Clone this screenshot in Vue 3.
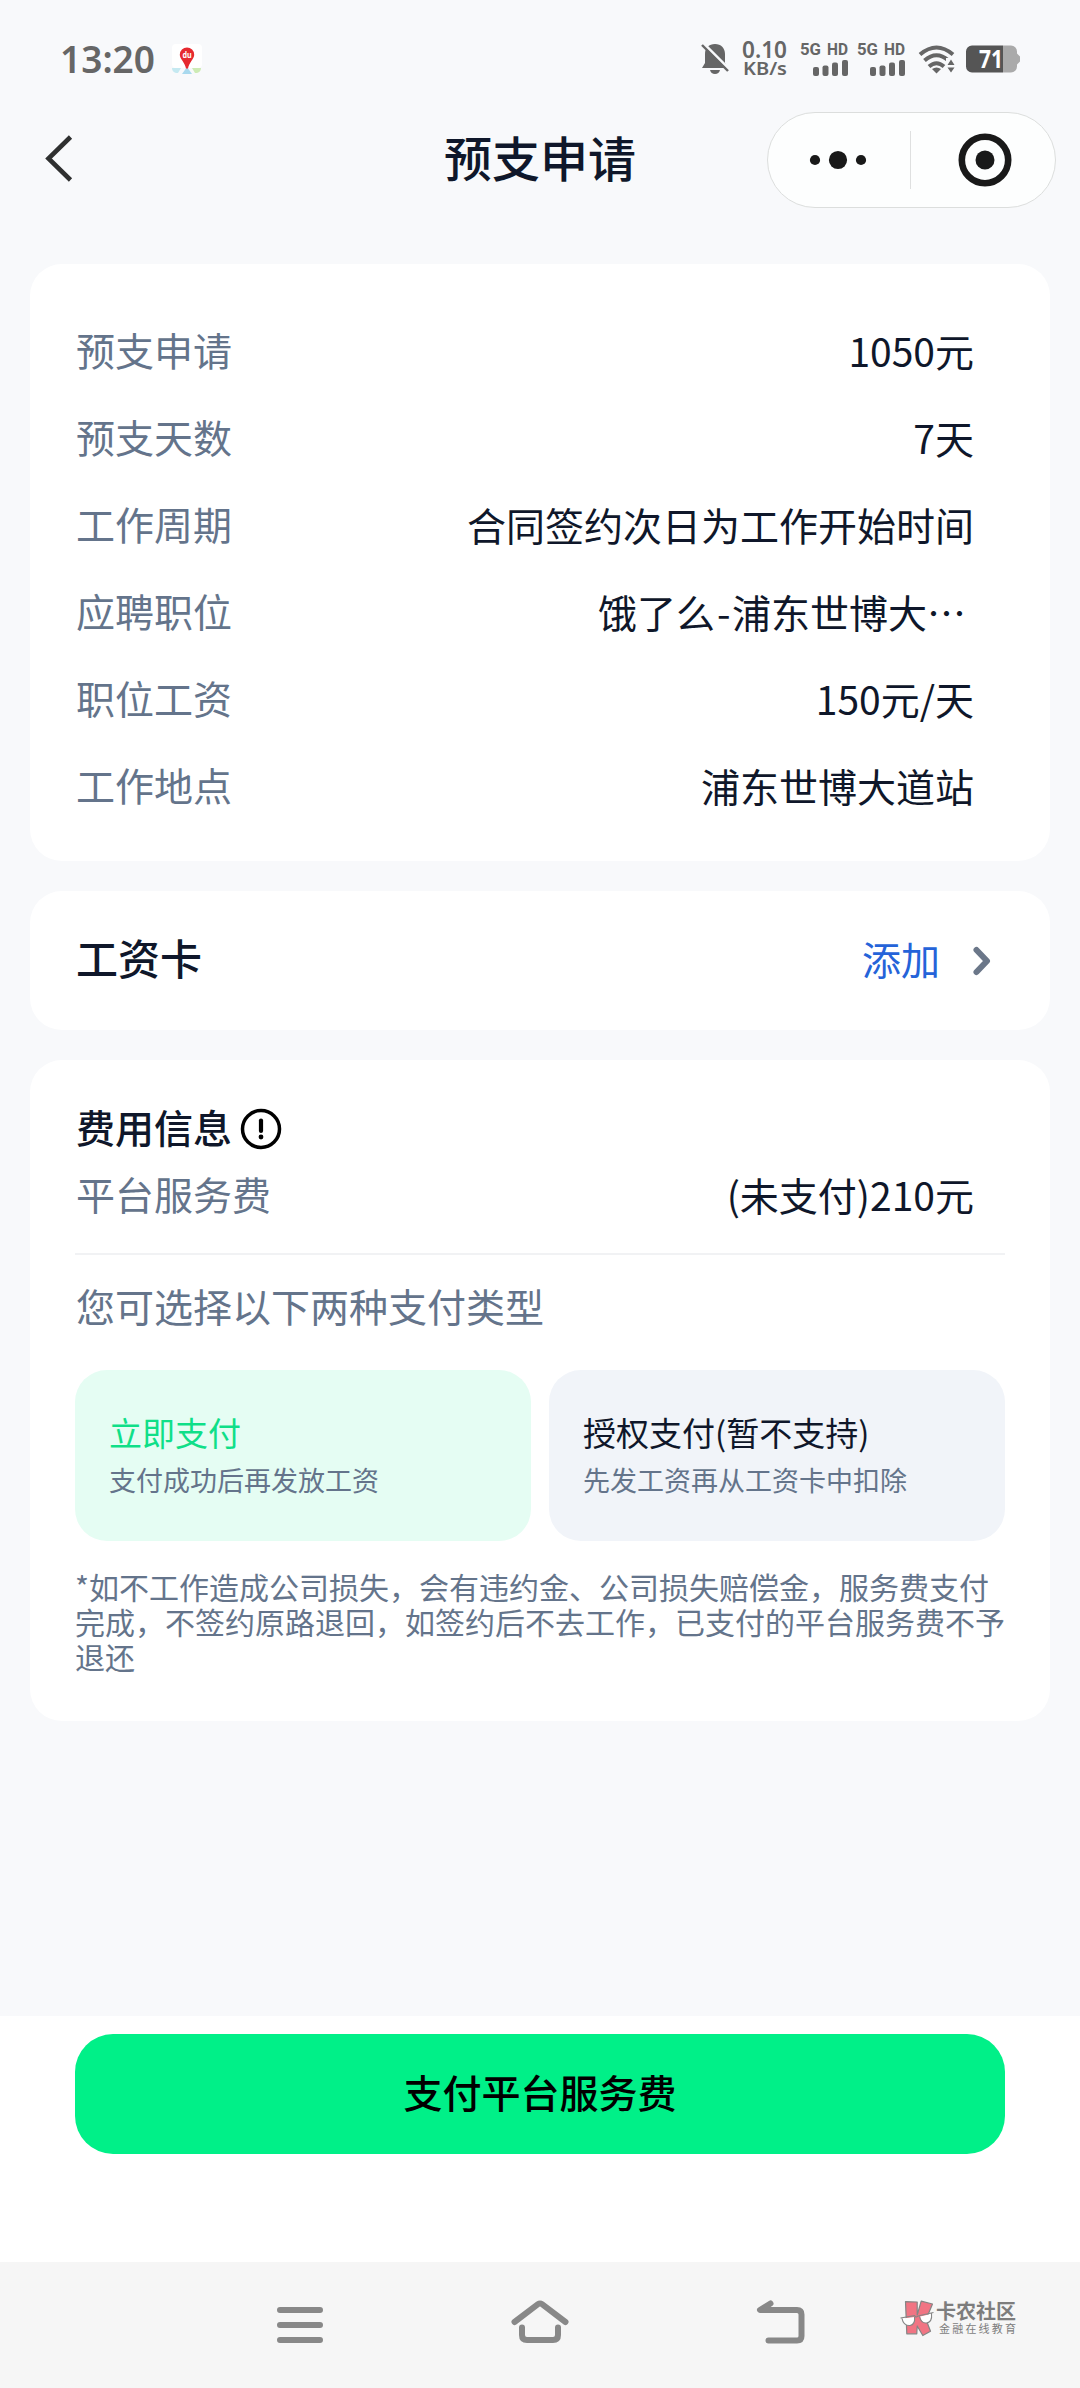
<script setup>
const details = [
  { label: '预支申请', value: ['1050元'] },
  { label: '预支天数', value: ['7天'] },
  { label: '工作周期', value: ['合同签约次日为工作开始时间'] },
  { label: '应聘职位', value: ['饿了么', '-', '浦东世博大…'], clipped: true },
  { label: '职位工资', value: ['150元/天'] },
  { label: '工作地点', value: ['浦东世博大道站'] }
]

const options = [
  { title: '立即支付', desc: '支付成功后再发放工资', active: true },
  { title: '授权支付(暂不支持)', desc: '先发工资再从工资卡中扣除', active: false }
]

const notice = [
  '*如不工作造成公司损失，会有违约金、公司损失赔偿金，服务费支付',
  '完成，不签约原路退回，如签约后不去工作，已支付的平台服务费不予',
  '退还'
]

const sims = [1, 2]
</script>

<template>
  <div class="screen">
    <div class="status">
      <svg class="clock" width="98" height="52" viewBox="0 0 98 52">
        <text x="0" y="40" textLength="95" lengthAdjust="spacingAndGlyphs">13:20</text>
      </svg>
      <svg class="map-app" width="32" height="32" viewBox="0 0 32 32">
        <rect x="1" y="1" width="30" height="24" rx="4" fill="#fff" />
        <path d="M1 25h9l-3 5H5q-4-1-4-5z" fill="#c5e9f1" />
        <path d="M11 31l5-7 5 7z" fill="#a9d9ee" />
        <path d="M21 25h9q0 4-4 5h-2z" fill="#cdebb5" />
        <path d="M16 4.500a7.200 7.200 0 0 1 7.200 7.200c0 4.500-5 7-6.200 13.800h-2C13.800 18.700 8.800 16.200 8.800 11.700a7.200 7.200 0 0 1 7.200-7.200z" fill="#e6292f" />
        <text x="11.400" y="15" textLength="9.200" lengthAdjust="spacingAndGlyphs" class="du">du</text>
      </svg>
      <div class="grow"></div>
      <svg width="28" height="32" viewBox="0 0 28 32">
        <path d="M14 1c6 0 10 4 10 10v9l3 5H1l3-5v-9C4 5 8 1 14 1zM9 27h10q-1 4-5 4t-5-4z" fill="#666" />
        <path d="M2 0l26 26" stroke="#f8f9fb" stroke-width="3" />
        <path d="M1 2l26 26" stroke="#666" stroke-width="2.400" />
      </svg>
      <div class="speed">
        <svg width="46" height="21" viewBox="0 0 46 21">
          <text x="0" y="19.500" font-size="23" textLength="45" lengthAdjust="spacingAndGlyphs">0.10</text>
        </svg>
        <svg width="46" height="21" viewBox="0 0 46 21">
          <text x="1" y="16" font-size="18.500" textLength="44" lengthAdjust="spacingAndGlyphs">KB/s</text>
        </svg>
      </div>
      <svg v-for="s in sims" :key="s" class="sim" :class="'sim-' + s" width="48" height="36" viewBox="0 0 48 36">
        <text x="0" y="13.500" textLength="21" lengthAdjust="spacingAndGlyphs">5G</text>
        <text x="27" y="13.500" textLength="21" lengthAdjust="spacingAndGlyphs">HD</text>
        <rect x="13" y="26" width="6" height="9" rx="2" />
        <rect x="22.500" y="24.500" width="6" height="10.500" rx="2" />
        <rect x="32" y="21.500" width="6" height="13.500" rx="2" />
        <rect x="42" y="19" width="6" height="16" rx="2" />
      </svg>
      <svg class="wifi" width="38" height="32" viewBox="0 0 38 32">
        <g fill="none" stroke="#666" stroke-width="4">
          <path d="M2 11.500Q18.500-2.500 35 11.500" />
          <path d="M6.500 17.500Q18.500 7 30.500 17.500" />
          <path d="M11 23.500Q18.500 17 26 23.500" />
        </g>
        <path d="M14 26q4.500-3 9 0l-4.500 4.500z" fill="#666" />
        <path d="M28 15h10v17H28z" fill="#f8f9fb" />
        <path d="M33 16.500l3.500 5.500h-7zM33 29.500l-3.500-5h7z" fill="#666" />
      </svg>
      <svg class="battery" width="54" height="28" viewBox="0 0 54 28">
        <path d="M37 0.500h8a6 6 0 0 1 6 6v2l3 3v5l-3 3v2a6 6 0 0 1-6 6h-8z" fill="#aaa" />
        <path d="M37 0.500v27H6a6 6 0 0 1-6-6v-15a6 6 0 0 1 6-6z" fill="#555" />
        <text x="13" y="23" textLength="24" lengthAdjust="spacingAndGlyphs">71</text>
      </svg>
    </div>

    <header class="bar">
      <div class="side">
        <svg width="28" height="50" viewBox="0 0 28 50">
          <path d="M25.500 3L3.500 24.500L25.500 46" fill="none" stroke="#2f3030" stroke-width="4.600" />
        </svg>
      </div>
      <h1>预支申请</h1>
      <div class="side end">
        <div class="capsule">
          <svg width="56" height="20" viewBox="0 0 56 20">
            <circle cx="5" cy="10" r="5.100" fill="#191919" />
            <circle cx="28" cy="10" r="9.100" fill="#191919" />
            <circle cx="51" cy="10" r="5.100" fill="#191919" />
          </svg>
          <i></i>
          <svg width="54" height="54" viewBox="0 0 54 54">
            <circle cx="27" cy="27" r="23.200" fill="none" stroke="#191919" stroke-width="6.600" />
            <circle cx="27" cy="27" r="9.500" fill="#191919" />
          </svg>
        </div>
      </div>
    </header>

    <main>
      <section class="card details">
        <div v-for="d in details" :key="d.label" class="row">
          <span class="label">{{ d.label }}</span>
          <span class="value" :class="{ clipped: d.clipped }"><span v-for="part in d.value" :key="part" :class="{ dash: part === '-' }">{{ part }}</span></span>
        </div>
      </section>

      <section class="card wage">
        <h2>工资卡</h2>
        <a>添加</a>
        <svg width="20" height="32" viewBox="0 0 20 32">
          <path d="M4.500 5L15 16L4.500 27" fill="none" stroke="#6b7789" stroke-width="6" stroke-linecap="round" stroke-linejoin="round" />
        </svg>
      </section>

      <section class="card fee">
        <div class="fee-head">
          <h3>费用信息</h3>
          <svg width="42" height="42" viewBox="0 0 42 42">
            <circle cx="21" cy="21" r="18.500" fill="none" stroke="#000" stroke-width="3.500" />
            <path d="M21 12.500v10.500" stroke="#000" stroke-width="4.200" stroke-linecap="round" />
            <circle cx="21" cy="29" r="2.400" />
          </svg>
        </div>
        <div class="row fee-row">
          <span class="label">平台服务费</span>
          <span class="value">(未支付)210元</span>
        </div>
        <p class="choose">您可选择以下两种支付类型</p>
        <div class="options">
          <div v-for="o in options" :key="o.title" class="option" :class="{ active: o.active }">
            <b>{{ o.title }}</b>
            <span>{{ o.desc }}</span>
          </div>
        </div>
        <div class="notice">
          <p v-for="n in notice" :key="n">{{ n }}</p>
        </div>
      </section>
    </main>

    <footer>
      <button type="button">支付平台服务费</button>
    </footer>

    <nav>
      <svg class="menu" width="46" height="36" viewBox="0 0 46 36">
        <path d="M3 3h40M3 18h40M3 33h40" stroke="#888" stroke-width="6" stroke-linecap="round" />
      </svg>
      <svg class="home" width="58" height="48" viewBox="0 0 58 48">
        <g fill="none" stroke="#888" stroke-width="6" stroke-linecap="round" stroke-linejoin="round">
          <path d="M3.500 25L27 7.200Q29 5.700 31 7.200L54.500 25" />
          <path d="M11 30.500V38q0 5 5 5h26q5 0 5-5v-7.500" />
        </g>
      </svg>
      <svg class="back" width="50" height="46" viewBox="0 0 50 46">
        <g fill="none" stroke="#888" stroke-width="6" stroke-linecap="round" stroke-linejoin="round">
          <path d="M14.500 5.500L4 12H41q4.500 0 4.500 4.500V38q0 4.500-4.500 4.500H12.500" />
        </g>
        <path d="M14.500 5.500L4 12h11z" fill="#888" />
      </svg>
      <div class="brand">
        <svg width="36" height="38" viewBox="0 0 36 38">
          <path d="M5.500 2.700L17.200 3V16L21.200 2.200L32.500 5L26 20.500L30.500 32.300L22.800 36.500L17.200 27L16.800 34.800H6.800z" fill="#f17483" stroke="#858585" stroke-width="1.200" stroke-linejoin="round" />
          <path d="M2.500 19.500L14.500 18q1.500 7.500-4.500 8.500-6 .5-7.500-7zM20 17.500l11-2.500q.8 8-4.500 9-5 .5-6.500-6.500z" fill="#fff" />
          <path d="M.5 19l14-2.300 1.500 1.500 3-1.500 14.500-3.200M2 19.500q1.500 7.500 8 7 5.500-1 4.500-8.500M19.500 17.500q1.500 7 7 6.500 6-1 5-9.500" fill="none" stroke="#858585" stroke-width="1.100" />
        </svg>
        <div class="brand-text">
          <strong>卡农社区</strong>
          <small>金融在线教育</small>
        </div>
      </div>
    </nav>
  </div>
</template>

<style>
body {
  margin: 0;
}
</style>

<style scoped>
* {
  box-sizing: border-box;
}

h1,
h2,
h3,
p {
  margin: 0;
  font-weight: 500;
}

svg {
  display: block;
  flex: none;
  overflow: visible;
}

.screen {
  width: 1080px;
  height: 2388px;
  display: flex;
  flex-direction: column;
  overflow: hidden;
  background: #f8f9fb;
  color: #0f172a;
  font-family: "Noto Sans CJK SC", "Noto Sans", sans-serif;
  white-space: nowrap;
}

.status {
  height: 112px;
  padding: 6px 60px 0 60px;
  display: flex;
  align-items: center;
}

.status text {
  font-family: "Noto Sans", sans-serif;
  font-weight: 600;
  fill: #666;
}

.clock text {
  font-size: 38px;
}

.map-app {
  margin-left: 13px;
}

.status .du {
  font-size: 8px;
  font-weight: 700;
  fill: #fff;
}

.grow {
  flex: 1;
}

.speed {
  margin-left: 13px;
}

.sim {
  margin-left: 9px;
  fill: #666;
}

.sim-1 {
  margin-left: 12px;
}

.status .sim text {
  font-family: Roboto, sans-serif;
  font-size: 17px;
  font-weight: 700;
}

.wifi {
  margin-left: 13px;
}

.battery {
  margin-left: 10px;
}

.status .battery text {
  font-size: 25px;
  font-weight: 700;
  fill: #fff;
}

.bar {
  height: 96px;
  padding: 0 24px 0 45px;
  display: flex;
  align-items: center;
}

.side {
  width: 380px;
  padding-bottom: 2px;
}

.bar h1 {
  flex: 1;
  margin-top: -8px;
  font-size: 48px;
  line-height: 60px;
  text-align: center;
}

.end {
  width: 401px;
  padding: 0;
  display: flex;
  justify-content: flex-end;
}

.capsule {
  width: 289px;
  height: 96px;
  padding-left: 42px;
  display: flex;
  align-items: center;
  border: 1px solid #dcdedd;
  border-radius: 48px;
  background: #fdfefe;
}

.capsule i {
  flex: none;
  width: 1px;
  height: 58px;
  margin: 0 47px 0 44px;
  background: #dfe0e0;
}

main {
  flex: 1;
  padding: 56px 30px 0;
  display: flex;
  flex-direction: column;
  gap: 30px;
}

.card {
  border-radius: 32px;
  background: #fff;
}

.details {
  height: 597px;
  padding: 42px 76px 0 46px;
}

.row {
  height: 87px;
  display: flex;
  align-items: center;
  justify-content: space-between;
  font-size: 39px;
  line-height: 60px;
}

.label {
  margin-top: -1px;
  color: #64748b;
}

.value {
  margin-top: 1px;
}

.clipped {
  padding-right: 8px;
}

.dash {
  padding: 0 1.500px 0 2px;
}

.wage {
  height: 139px;
  padding: 0 58px 0 46px;
  display: flex;
  align-items: center;
}

.wage h2 {
  flex: 1;
  margin-top: -7px;
  font-size: 42px;
  line-height: 60px;
}

.wage a {
  margin: -5px 32px 0 0;
  font-size: 39px;
  line-height: 60px;
  color: #2563d9;
}

.fee {
  height: 661px;
  padding: 36px 45px 0;
}

.fee-head {
  height: 64px;
  padding-left: 1px;
  display: flex;
  align-items: center;
  gap: 8px;
}

.fee-head svg {
  margin-top: 2px;
}

.fee-head h3 {
  margin-top: -4px;
  font-size: 39px;
  line-height: 60px;
}

.fee-row {
  height: 95px;
  padding: 0 31px 26px 1px;
  border-bottom: 2px solid #f1f2f4;
}

.choose {
  height: 115px;
  padding: 20px 0 0 1px;
  font-size: 39px;
  font-weight: 400;
  line-height: 60px;
  color: #64748b;
}

.options {
  display: flex;
  gap: 18px;
}

.option {
  width: 456px;
  height: 171px;
  padding: 38px 0 0 34px;
  border-radius: 32px;
  background: #f1f4f9;
}

.option.active {
  background: #e5fdf3;
}

.option b,
.option span {
  display: block;
}

.option b {
  font-size: 33px;
  font-weight: 400;
  line-height: 48px;
}

.option.active b {
  color: #0fdf88;
}

.option span {
  font-size: 27px;
  line-height: 48px;
  color: #64748b;
}

.notice {
  margin-top: 28px;
}

.notice p {
  font-size: 30px;
  font-weight: 400;
  line-height: 35.200px;
  color: #64748b;
}

footer {
  height: 246px;
  padding: 18px 75px 0;
  background: #fff;
}

button {
  display: block;
  width: 930px;
  height: 120px;
  padding: 0 0 6px;
  border: 0;
  border-radius: 38px;
  background: #00f088;
  color: #000;
  font: 500 39px/60px "Noto Sans CJK SC", sans-serif;
}

nav {
  height: 126px;
  padding-left: 277px;
  display: flex;
  background: #f6f6f6;
}

.menu {
  margin-top: 45px;
}

.home {
  margin: 35px 0 0 188px;
}

.back {
  margin: 35.500px 0 0 187px;
}

.brand {
  margin: 37px 0 0 94px;
  display: flex;
}

.brand-text {
  display: flex;
  flex-direction: column;
  color: #7d7d7d;
}

.brand strong {
  font-size: 20px;
  font-weight: 700;
  line-height: 23px;
}

.brand small {
  padding-left: 3px;
  font-size: 11px;
  line-height: 13px;
  letter-spacing: 2.200px;
}
</style>
